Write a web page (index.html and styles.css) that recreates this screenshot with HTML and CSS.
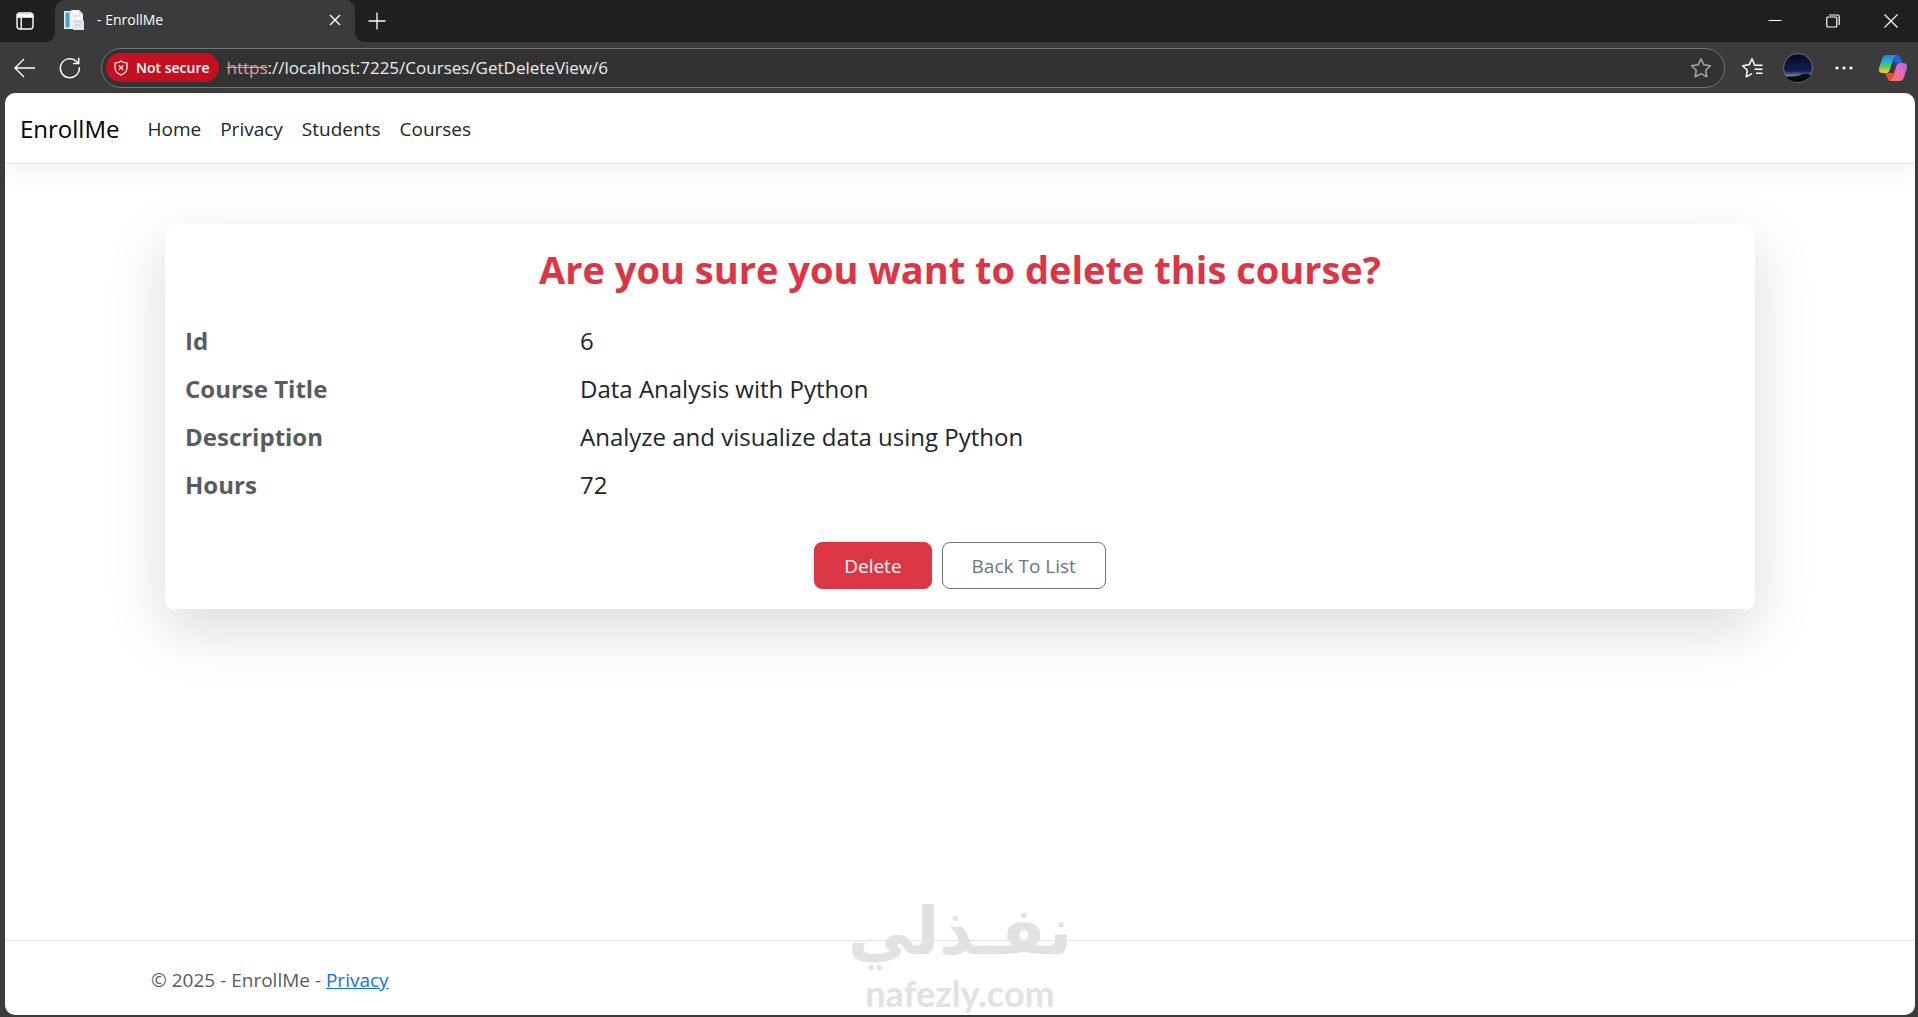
FILE: index.html
```html
<!DOCTYPE html>
<html lang="en">
<head>
<meta charset="utf-8">
<title>- EnrollMe</title>
<link rel="stylesheet" href="styles.css">
</head>
<body>
<div class="titlebar">
  <div class="tab-actions">
    <button class="icon-btn" type="button" aria-label="Tab actions">
      <svg width="18" height="18" viewBox="0 0 18 18" fill="none" stroke="#fff" stroke-width="1.4"><rect x="1" y="1" width="16" height="16" rx="3"/><path d="M1.5 2.5h15v2.6h-15z" fill="#fff"/><path d="M5.2 5v12"/></svg>
    </button>
  </div>
  <div class="tab">
    <svg class="tab-icon" width="20" height="20" viewBox="0 0 20 20"><path d="M0 1h11v18H0z" fill="#e6edf2"/><path d="M1.5 2.5h4v15h-4z" fill="#4b9fc4"/><path d="M7 0h8l4 4v14H7z" fill="#f5f6f8"/><path d="M15 0v4h4z" fill="#cfd4dc"/><path d="M9 11h11v9H9z" fill="#e3e5ec"/><path d="M9 11h11M11 15h6M9 6h7" stroke="#c3c8d4"/></svg>
    <span class="tab-title">- EnrollMe</span>
    <button class="icon-btn" type="button" aria-label="Close tab">
      <svg width="12" height="12" viewBox="0 0 12 12" stroke="#fff" stroke-width="1.4"><path d="M1 1l10 10M11 1L1 11"/></svg>
    </button>
  </div>
  <button class="icon-btn new-tab" type="button" aria-label="New tab">
    <svg width="18" height="18" viewBox="0 0 18 18" stroke="#fff" stroke-width="1.3"><path d="M9 .5v17M.5 9h17"/></svg>
  </button>
  <div class="window-controls">
    <button class="icon-btn" type="button" aria-label="Minimize"><svg width="14" height="14" viewBox="0 0 14 14" stroke="#fff"><path d="M.5 6.5h13"/></svg></button>
    <button class="icon-btn" type="button" aria-label="Restore"><svg width="14" height="14" viewBox="0 0 14 14" fill="none" stroke="#fff" stroke-width="1.2"><rect x=".8" y="3" width="10" height="10" rx="1"/><path d="M3 1h8.500q1.700 0 1.700 1.700V11"/></svg></button>
    <button class="icon-btn" type="button" aria-label="Close"><svg width="14" height="14" viewBox="0 0 14 14" stroke="#fff" stroke-width="1.2"><path d="M.5.5l13 13M13.500.5l-13 13"/></svg></button>
  </div>
</div>
<div class="toolbar">
  <button class="icon-btn" type="button" aria-label="Back"><svg width="22" height="20" viewBox="0 0 22 20" fill="none" stroke="#fff" stroke-width="1.4"><path d="M21 10H1.500M10 1L1 10l9 9"/></svg></button>
  <button class="icon-btn refresh" type="button" aria-label="Refresh"><svg width="22" height="22" viewBox="0 0 22 22" fill="none" stroke="#fff" stroke-width="1.500"><path d="M20.300 10A9.500 9.500 0 1 1 17.300 4.200L19.500 6.300"/><path d="M19.700.8v5.700H14"/></svg></button>
  <div class="address">
    <button class="not-secure" type="button">
      <svg width="14" height="16" viewBox="0 0 14 16" fill="none" stroke="#fff" stroke-width="1.200"><path d="M7 1Q9.500 3 13 3v5q0 4.500-6 7-6-2.500-6-7V3q3.500 0 6-2z"/><path d="M4.800 5.500l4.400 4.400M9.200 5.500L4.800 9.900"/></svg>
      Not secure
    </button>
    <s class="scheme">https</s>
    <input class="url" type="text" aria-label="Address" value="://localhost:7225/Courses/GetDeleteView/6">
    <button class="icon-btn" type="button" aria-label="Add to favorites"><svg width="22" height="22" viewBox="0 0 22 22" fill="none" stroke="#a8a8a8" stroke-width="1.500" stroke-linejoin="round"><path d="M11 1.800l2.900 6 6.500.9-4.700 4.600 1.100 6.500-5.800-3.100-5.800 3.100 1.100-6.500L1.600 8.700l6.500-.9z"/></svg></button>
  </div>
  <button class="icon-btn" type="button" aria-label="Favorites"><svg width="22" height="22" viewBox="0 0 22 22" fill="none" stroke="#fff" stroke-width="1.500" stroke-linejoin="round"><path d="M14.500 8.200h-.8L11 1.800l-2.900 6-6.500.9 4.700 4.600-1.100 6.500 5.800-3.100M14 8.200h7.500M13.500 12.200h8M15 16.200h6.500"/></svg></button>
  <button class="icon-btn" type="button" aria-label="Profile"><svg width="30" height="30" viewBox="0 0 30 30"><defs><linearGradient id="sky" x2="0" y2="1"><stop offset="0" stop-color="#06071f"/><stop offset=".6" stop-color="#101f55"/><stop offset=".76" stop-color="#6b7c9c"/><stop offset=".85" stop-color="#080a0c"/></linearGradient></defs><circle cx="15" cy="15" r="14.500" fill="url(#sky)" stroke="#707070"/><path d="M3 24Q14 24 20 21Q24 20 28 22Q23 29 15 29Q7 29 3 24z" fill="#090b0c"/></svg></button>
  <button class="icon-btn" type="button" aria-label="Settings and more"><svg width="22" height="4" viewBox="0 0 22 4" fill="#fff"><circle cx="4" cy="2" r="1.600"/><circle cx="11" cy="2" r="1.600"/><circle cx="18" cy="2" r="1.600"/></svg></button>
  <button class="icon-btn copilot" type="button" aria-label="Copilot">
    <svg width="28" height="28" viewBox="0 0 28 28"><defs><linearGradient id="cool" x2="0" y2="1"><stop offset="0" stop-color="#2a7ff0"/><stop offset=".4" stop-color="#21b6c8"/><stop offset=".7" stop-color="#7ac943"/><stop offset="1" stop-color="#f6d32c"/></linearGradient><linearGradient id="warm" x1="1" x2="0" y2="1"><stop offset="0" stop-color="#a86bf0"/><stop offset=".5" stop-color="#f067b0"/><stop offset="1" stop-color="#ff7a45"/></linearGradient></defs><path d="M14 1h4q3 0 4 4l1 4h-8z" fill="#1f62dc"/><path d="M6 19h8l1 8h-3q-3 0-4-4z" fill="#f2493d"/><path d="M8 1h10q-3 1-4 5l-3 9q-1 4-4 4H4q-5 0-4-5L3 5q1-4 5-4z" fill="url(#cool)"/><path d="M20 27H10q3-1 4-5l3-9q1-4 4-4h3q5 0 4 5l-3 9q-1 4-5 4z" fill="url(#warm)"/></svg>
  </button>
</div>
<div class="viewport">
  <header class="navbar">
    <a class="brand" href="#">EnrollMe</a>
    <nav class="nav">
      <a href="#">Home</a>
      <a href="#">Privacy</a>
      <a href="#">Students</a>
      <a href="#">Courses</a>
    </nav>
  </header>
  <main class="main">
    <section class="card">
      <h1 class="card-title">Are you sure you want to delete this course?</h1>
      <dl class="details">
        <dt>Id</dt><dd>6</dd>
        <dt>Course Title</dt><dd>Data Analysis with Python</dd>
        <dt>Description</dt><dd>Analyze and visualize data using Python</dd>
        <dt>Hours</dt><dd>72</dd>
      </dl>
      <form class="actions">
        <button class="btn btn-danger" type="submit">Delete</button>
        <a class="btn btn-outline" href="#">Back To List</a>
      </form>
    </section>
  </main>
  <footer class="footer">© 2025 - EnrollMe - <a href="#">Privacy</a></footer>
  <div class="watermark">
    <span class="watermark-ar" lang="ar" dir="rtl">نفـذلي</span>
    <span class="watermark-en">nafezly.com</span>
  </div>
</div>
</body>
</html>
```
FILE: styles.css
```css
* { box-sizing: border-box; }

body {
  margin: 0;
  min-height: 100vh;
  display: flex;
  flex-direction: column;
  background: #3b3b3b;
  color: #212529;
  font-family: "Open Sans", "Noto Sans", sans-serif;
  font-size: 19px;
  line-height: 30px;
}

.icon-btn {
  display: flex;
  align-items: center;
  justify-content: center;
  flex: none;
  padding: 0;
  border: 0;
  background: none;
}

/* Window title bar */
.titlebar {
  display: flex;
  height: 42px;
  background: #3b3b3b;
}

.tab-actions {
  display: flex;
  align-items: center;
  width: 55px;
  padding: 0 16px;
  background: #1f1f1f;
  border-bottom-right-radius: 9px;
}

.tab {
  display: flex;
  align-items: center;
  width: 300px;
  padding: 0 14px 2px 9px;
  gap: 13px;
  background: linear-gradient(#1f1f1f, #1f1f1f) top / 100% 12px no-repeat;
  position: relative;
  z-index: 0;
}

.tab::before {
  content: "";
  position: absolute;
  inset: 0;
  z-index: -1;
  border-radius: 10px 10px 0 0;
  background: #3b3b3b;
}

.tab-title {
  flex: 1;
  color: #fff;
  font-size: 14px;
}

.new-tab {
  width: 44px;
  background: #1f1f1f;
  border-bottom-left-radius: 9px;
}

.window-controls {
  display: flex;
  flex: 1;
  justify-content: flex-end;
  gap: 44px;
  padding-right: 20px;
  background: #1f1f1f;
}

/* Address toolbar */
.toolbar {
  display: flex;
  align-items: center;
  height: 51px;
  padding: 0 11px 0 14px;
  gap: 20px;
}

.refresh { margin-left: 3px; }

.copilot { margin-left: 4px; }

.address {
  display: flex;
  align-items: center;
  flex: 1;
  height: 40px;
  margin-right: -4px;
  padding: 0 12px 0 4px;
  border: 1px solid #747474;
  border-radius: 20px;
  background: #323232;
}

.not-secure {
  display: flex;
  align-items: center;
  gap: 8px;
  height: 29px;
  padding: 0 9px 0 8px;
  border: 0;
  border-radius: 15px;
  background: #c50f1f;
  color: #fff;
  font: 600 14px "Open Sans", sans-serif;
}

.scheme {
  margin-left: 8px;
  color: #e99a9a;
  font-size: 17px;
}

.url {
  flex: 1;
  min-width: 0;
  padding: 0;
  border: 0;
  outline: 0;
  background: none;
  color: #ececec;
  font: 17px "Open Sans", sans-serif;
}

/* Page area */
.viewport {
  position: relative;
  display: flex;
  flex: 1;
  flex-direction: column;
  margin: 0 3px 2px 5px;
  border-radius: 10px;
  background: #fff;
  overflow: hidden;
}

.navbar {
  display: flex;
  align-items: center;
  height: 71px;
  padding: 2px 15px 0;
  gap: 28px;
  border-bottom: 1px solid #dee2e6;
  box-shadow: 0 10px 20px rgba(0, 0, 0, 0.05);
}

.brand {
  color: #000;
  font-size: 24px;
  text-decoration: none;
}

.nav {
  display: flex;
  gap: 19px;
}

.nav a {
  color: #212529;
  text-decoration: none;
}

.main {
  flex: 1;
  width: 100%;
  max-width: 1620px;
  margin: 0 auto;
  padding: 60px 15px;
}

.card {
  padding: 20px;
  border-radius: 8px;
  background: #fff;
  box-shadow: 0 20px 60px rgba(0, 0, 0, 0.15);
}

.card-title {
  margin: 0 0 28px;
  color: #dc3545;
  font-size: 38px;
  line-height: 50px;
  text-align: center;
}

.details {
  display: grid;
  grid-template-columns: 1fr 3fr;
  row-gap: 10px;
  margin: 0 -15px;
  font-size: 24px;
  line-height: 38px;
}

.details dt {
  padding: 0 15px;
  color: #595c5f;
  font-weight: 700;
}

.details dd {
  margin: 0;
  padding: 0 15px;
}

.actions {
  display: flex;
  justify-content: center;
  gap: 10px;
  margin-top: 38px;
}

.btn {
  padding: 8px 29px 7px;
  border: 1px solid #6c757d;
  border-radius: 8px;
  background: #fff;
  color: #6c757d;
  font: 19px/30px "Open Sans", sans-serif;
  text-decoration: none;
}

.btn-danger {
  border-color: #dc3545;
  background: #dc3545;
  color: #fff;
}

.footer {
  padding: 24px 146px 20px;
  border-top: 1px solid #dee2e6;
  color: #595c5f;
}

.footer a { color: #0d6efd; }

/* Site watermark over the page */
.watermark {
  position: absolute;
  left: 50%;
  bottom: 0;
  display: flex;
  flex-direction: column;
  align-items: center;
  transform: translateX(-50%);
  color: #e2e2e2;
  font-weight: 700;
  pointer-events: none;
}

.watermark-ar {
  font-family: "DejaVu Sans", sans-serif;
  font-size: 66px;
  line-height: 78px;
}

.watermark-en {
  font-family: Lato, sans-serif;
  font-size: 36px;
  line-height: 44px;
}
```
